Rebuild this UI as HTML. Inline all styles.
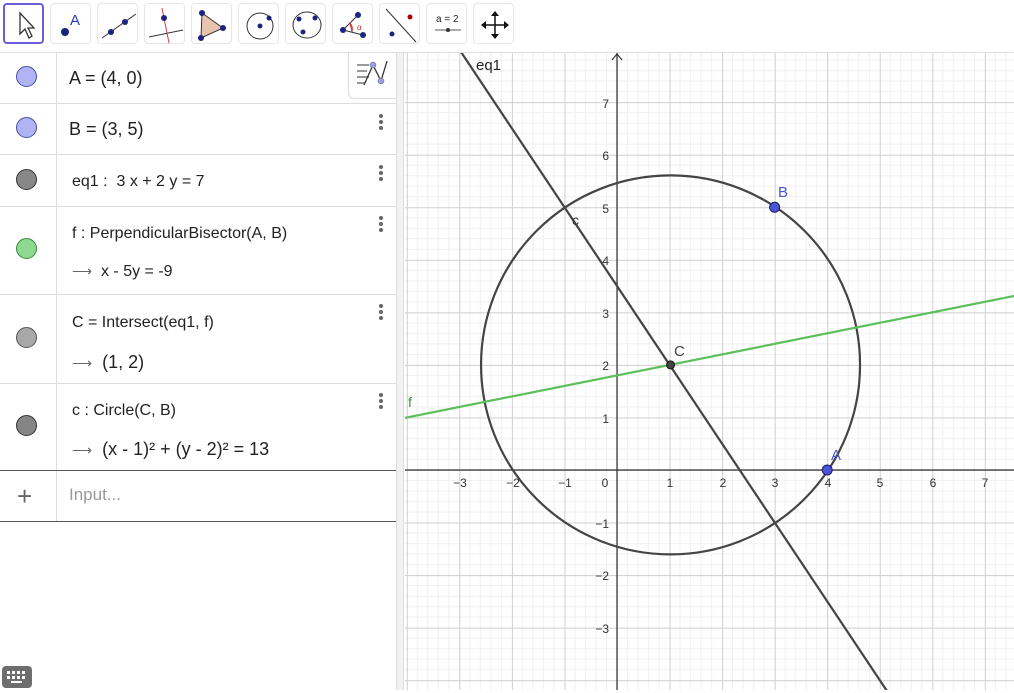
<!DOCTYPE html>
<html><head><meta charset="utf-8"><style>
*{margin:0;padding:0;box-sizing:border-box}
body{width:1014px;height:690px;overflow:hidden;background:#fff;font-family:"Liberation Sans",sans-serif;position:relative;color:#222}
.tb{position:absolute;left:0;top:0;width:1014px;height:53px;background:#fff;border-bottom:1px solid #ddd}
.btn{position:absolute;top:3px;width:41px;height:41px;border:1px solid #e6e6e6;border-radius:4px;background:#fff}
.btn svg{position:absolute;left:0;top:0}
.sel{border:2px solid #6a5fd8}
.av{position:absolute;left:0;top:53px;width:396px;height:637px;background:#fff}
.split{position:absolute;left:396px;top:53px;width:8px;height:637px;background:#f2f2f2;border-left:1px solid #ddd;border-right:1px solid #ddd}
.row{position:absolute;left:0;width:396px;border-bottom:1px solid #ddd}
.row .mk{position:absolute;left:0;top:0;bottom:0;width:57px;border-right:1px solid #ddd}
.dot{position:absolute;left:16px;width:21px;height:21px;border-radius:50%;border:1px solid #555}
.t{position:absolute;white-space:nowrap}
.big{font-size:18px}
.sm{font-size:16px}
.arr{color:#666;font-size:14px}
.menu{position:absolute;left:379px;width:4px}
.menu i{display:block;width:4px;height:4px;border-radius:50%;background:#666;margin-bottom:2px}
</style></head><body>
<div class="tb">
 <div class="btn sel" style="left:3px"><svg width="41" height="41"><path d="M15 8 L15 29 L20 24 L24 33 L27 31 L23 23 L29 23 Z" fill="#fff" stroke="#333" stroke-width="1.3"/></svg></div>
 <div class="btn" style="left:50px"><svg width="41" height="41"><circle cx="14" cy="28" r="4" fill="#1a237e"/><text x="19" y="21" font-size="15" fill="#2336c0" font-family="Liberation Sans">A</text></svg></div>
 <div class="btn" style="left:97px"><svg width="41" height="41"><line x1="4" y1="34" x2="38" y2="10" stroke="#333"/><circle cx="13" cy="28" r="3" fill="#1a237e"/><circle cx="27" cy="18" r="3" fill="#1a237e"/></svg></div>
 <div class="btn" style="left:144px"><svg width="41" height="41"><line x1="4" y1="33" x2="38" y2="26" stroke="#333"/><line x1="17" y1="4" x2="24" y2="39" stroke="#c44"/><circle cx="19" cy="14" r="3" fill="#1a237e"/></svg></div>
 <div class="btn" style="left:191px"><svg width="41" height="41"><path d="M10 9 L31 24 L9 34 Z" fill="#e8c4b0" stroke="#333"/><circle cx="10" cy="9" r="3" fill="#1a237e"/><circle cx="31" cy="24" r="3" fill="#1a237e"/><circle cx="9" cy="34" r="3" fill="#1a237e"/></svg></div>
 <div class="btn" style="left:238px"><svg width="41" height="41"><circle cx="21" cy="22" r="13" fill="none" stroke="#333"/><circle cx="21" cy="22" r="2.5" fill="#1a237e"/><circle cx="30" cy="14" r="2.5" fill="#1a237e"/></svg></div>
 <div class="btn" style="left:285px"><svg width="41" height="41"><ellipse cx="21" cy="21" rx="14" ry="13" fill="none" stroke="#333"/><circle cx="13" cy="15" r="2.5" fill="#1a237e"/><circle cx="29" cy="14" r="2.5" fill="#1a237e"/><circle cx="17" cy="28" r="2.5" fill="#1a237e"/></svg></div>
 <div class="btn" style="left:332px"><svg width="41" height="41"><path d="M10 26 L25 11 M10 26 L30 31" stroke="#333" fill="none"/><path d="M17 19 A10 10 0 0 1 19 28 Z" fill="#f0b0b0" stroke="#c33"/><circle cx="10" cy="26" r="3" fill="#1a237e"/><circle cx="25" cy="11" r="3" fill="#1a237e"/><circle cx="30" cy="31" r="3" fill="#1a237e"/><text x="24" y="26" font-size="8" fill="#c33">α</text></svg></div>
 <div class="btn" style="left:379px"><svg width="41" height="41"><line x1="6" y1="5" x2="36" y2="38" stroke="#333"/><circle cx="30" cy="13" r="2.5" fill="#a00"/><circle cx="12" cy="30" r="2.5" fill="#1a237e"/></svg></div>
 <div class="btn" style="left:426px"><svg width="41" height="41"><text x="9" y="18" font-size="10" fill="#222" font-family="Liberation Sans">a = 2</text><line x1="8" y1="26" x2="34" y2="26" stroke="#555"/><circle cx="21" cy="26" r="2" fill="#333"/></svg></div>
 <div class="btn" style="left:473px"><svg width="41" height="41"><path d="M21 10 V32 M10 21 H32" stroke="#111" stroke-width="1.5"/><path d="M21 7 L17 12 H25 Z M21 35 L17 30 H25 Z M7 21 L12 17 V25 Z M35 21 L30 17 V25 Z" fill="#111"/></svg></div>
</div>

<div class="av">
 <div class="row" style="top:0;height:51px"><div class="mk"></div><div class="dot" style="top:13px;background:#b0b4f5;border-color:#4a4fa0"></div><div class="t big" style="left:69px;top:15px">A = (4, 0)</div>
  <div style="position:absolute;left:348px;top:0;width:48px;height:46px;border:1px solid #ddd;border-top:none;border-right:none;border-radius:0 0 0 6px;background:#fff"><svg width="48" height="46"><path d="M8 12 H20 M8 18 H18 M8 24 H20 M8 30 H16" stroke="#999" stroke-width="2"/><path d="M15 32 L24 12 L32 28 L38 8" stroke="#333" stroke-width="1.3" fill="none"/><circle cx="24" cy="12" r="3" fill="#9da0e8" stroke="#555" stroke-width=".5"/><circle cx="32" cy="28" r="3" fill="#9da0e8" stroke="#555" stroke-width=".5"/></svg></div></div>
 <div class="row" style="top:51px;height:51px"><div class="mk"></div><div class="dot" style="top:13px;background:#b0b4f5;border-color:#4a4fa0"></div><div class="t big" style="left:69px;top:15px">B = (3, 5)</div><div class="menu" style="top:10px"><i></i><i></i><i></i></div></div>
 <div class="row" style="top:102px;height:52px"><div class="mk"></div><div class="dot" style="top:14px;background:#888;border-color:#333"></div><div class="t sm" style="left:72px;top:18px">eq1 :&nbsp; 3 x + 2 y = 7</div><div class="menu" style="top:10px"><i></i><i></i><i></i></div></div>
 <div class="row" style="top:154px;height:88px"><div class="mk"></div><div class="dot" style="top:31px;background:#8fd88f;border-color:#3a8a3a"></div><div class="t sm" style="left:72px;top:18px">f : PerpendicularBisector(A, B)</div><div class="t sm" style="left:72px;top:56px"><span class="arr">⟶</span>&nbsp; x - 5y = -9</div><div class="menu" style="top:9px"><i></i><i></i><i></i></div></div>
 <div class="row" style="top:242px;height:89px"><div class="mk"></div><div class="dot" style="top:32px;background:#a8a8a8;border-color:#555"></div><div class="t sm" style="left:72px;top:19px">C = Intersect(eq1, f)</div><div class="t big" style="left:72px;top:57px"><span class="arr">⟶</span>&nbsp; (1, 2)</div><div class="menu" style="top:9px"><i></i><i></i><i></i></div></div>
 <div class="row" style="top:331px;height:87px;border-bottom:1px solid #555"><div class="mk"></div><div class="dot" style="top:31px;background:#858585;border-color:#333"></div><div class="t sm" style="left:72px;top:18px">c : Circle(C, B)</div><div class="t big" style="left:72px;top:55px"><span class="arr">⟶</span>&nbsp; (x - 1)² + (y - 2)² = 13</div><div class="menu" style="top:9px"><i></i><i></i><i></i></div></div>
 <div class="row" style="top:418px;height:51px;border-bottom:1px solid #555"><div class="mk"></div><div class="t" style="left:17px;top:10px;font-size:26px;color:#666;font-weight:300">+</div><div class="t big" style="left:69px;top:14px;color:#999;font-size:17px">Input...</div></div>
 <div style="position:absolute;left:2px;top:613px;width:30px;height:22px;border-radius:4px;background:#6e6e6e"><svg width="30" height="22"><g fill="#fff"><rect x="5" y="5" width="3" height="3"/><rect x="10" y="5" width="3" height="3"/><rect x="15" y="5" width="3" height="3"/><rect x="20" y="5" width="3" height="3"/><rect x="5" y="10" width="3" height="3"/><rect x="10" y="10" width="3" height="3"/><rect x="15" y="10" width="3" height="3"/><rect x="20" y="10" width="3" height="3"/><rect x="9" y="15" width="11" height="2"/></g></svg></div>
</div>
<div class="split"></div>

<svg style="position:absolute;left:0;top:0" width="1014" height="690" font-family="Liberation Sans">
 <defs>
  <pattern id="g" patternUnits="userSpaceOnUse" x="617" y="470" width="52.55" height="52.55">
   <path d="M10.51 0V52.55M21.02 0V52.55M31.53 0V52.55M42.04 0V52.55M0 10.51H52.55M0 21.02H52.55M0 31.53H52.55M0 42.04H52.55" stroke="#f0f0f0" stroke-width="1"/>
   <path d="M0.5 0V52.55M0 0.5H52.55" stroke="#cfcfcf" stroke-width="1"/>
  </pattern>
  <clipPath id="c"><rect x="405" y="53" width="609" height="637"/></clipPath>
 </defs>
 <g clip-path="url(#c)">
  <rect x="405" y="53" width="609" height="637" fill="#fff"/>
  <rect x="405" y="53" width="609" height="637" fill="url(#g)"/>
  <line x1="405" y1="470" x2="1014" y2="470" stroke="#333" stroke-width="1.2"/>
  <line x1="617" y1="53" x2="617" y2="690" stroke="#333" stroke-width="1.2"/>
  <path d="M612 60 L617 54 L622 60" fill="none" stroke="#333" stroke-width="1.2"/>
  <g font-size="12" fill="#333" text-anchor="middle">
   <text x="460" y="487">−3</text><text x="513" y="487">−2</text><text x="565" y="487">−1</text><text x="605" y="487">0</text>
   <text x="670" y="487">1</text><text x="723" y="487">2</text><text x="775" y="487">3</text><text x="828" y="487">4</text><text x="880" y="487">5</text><text x="933" y="487">6</text><text x="985" y="487">7</text>
  </g>
  <g font-size="12" fill="#333" text-anchor="end">
   <text x="609" y="108">7</text><text x="609" y="160">6</text><text x="609" y="213">5</text><text x="609" y="265">4</text><text x="609" y="318">3</text><text x="609" y="370">2</text><text x="609" y="423">1</text>
   <text x="609" y="528">−1</text><text x="609" y="580">−2</text><text x="609" y="633">−3</text>
  </g>
  <circle cx="670.55" cy="364.9" r="189.5" fill="none" stroke="#444" stroke-width="2.2"/>
  <line x1="396.3" y1="419.6" x2="1016.4" y2="295.5" stroke="#5cbf5c" stroke-width="2.2"/>
  <line x1="459.4" y1="49.6" x2="886.8" y2="690.7" stroke="#444" stroke-width="2.2"/>
  <circle cx="670.55" cy="364.9" r="4" fill="#444" stroke="#111"/>
  <circle cx="774.65" cy="207.25" r="5" fill="#4a55d8" stroke="#1a1a60"/>
  <circle cx="827.2" cy="470" r="5" fill="#4a55d8" stroke="#1a1a60"/>
  <text x="476" y="70" font-size="15" fill="#222">eq1</text>
  <text x="572" y="225" font-size="14" fill="#333">c</text>
  <text x="674" y="356" font-size="15" fill="#444">C</text>
  <text x="778" y="197" font-size="15" fill="#4a55d8">B</text>
  <text x="831" y="460" font-size="15" fill="#4a55d8">A</text>
  <text x="408" y="407" font-size="14" fill="#3a9a3a">f</text>
 </g>
</svg>
</body></html>
